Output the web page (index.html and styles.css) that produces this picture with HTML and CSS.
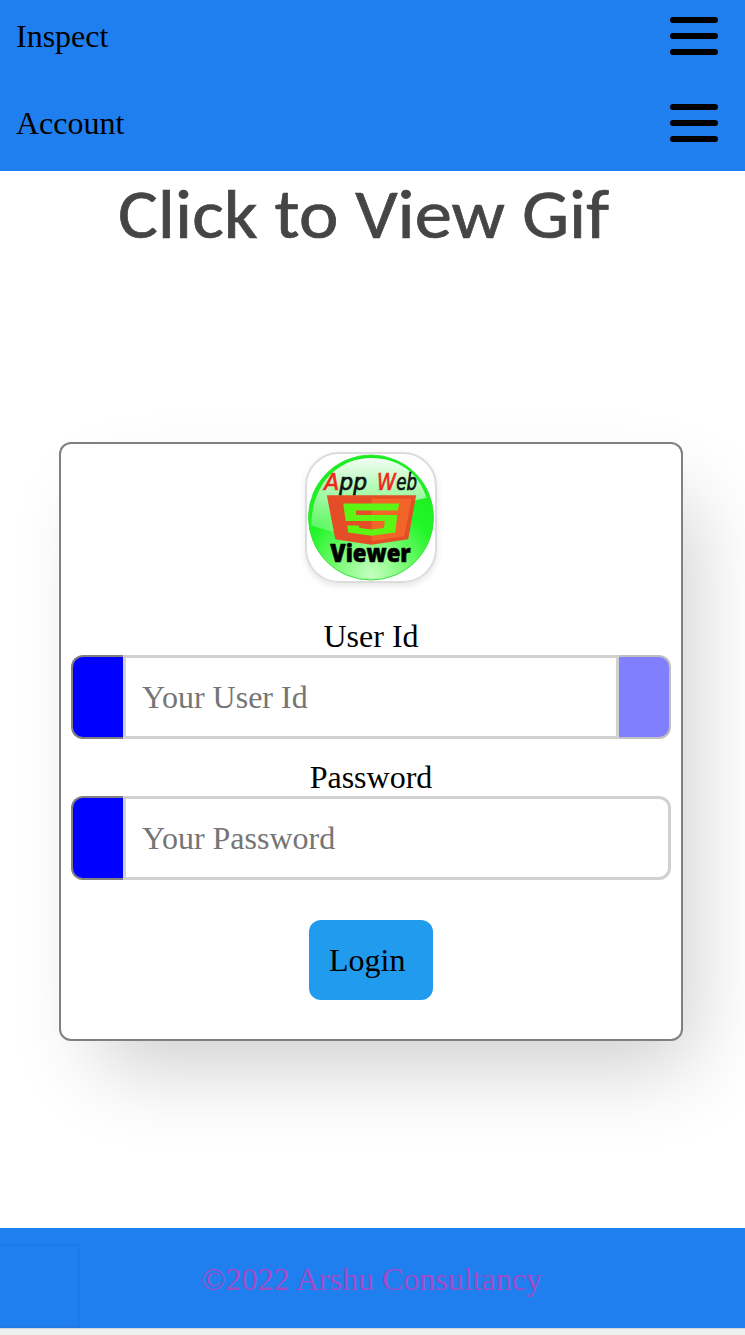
FILE: index.html
```
<!DOCTYPE html>
<html lang="en">
<head>
<meta charset="utf-8">
<title>App Web Viewer</title>
<link rel="stylesheet" href="styles.css">
</head>
<body>
<header class="nav">
  <div class="nav-row">
    <span class="nav-text">Inspect</span>
    <svg class="burger" viewBox="0 0 48 38"><path d="M3 3H45M3 19H45M3 35H45"/></svg>
  </div>
  <div class="nav-row">
    <span class="nav-text">Account</span>
    <svg class="burger" viewBox="0 0 48 38"><path d="M3 3H45M3 19H45M3 35H45"/></svg>
  </div>
</header>
<main class="main">
  <svg class="banner" viewBox="0 0 745 100"><text x="118" y="67" textLength="491" lengthAdjust="spacingAndGlyphs">Click to View Gif</text></svg>
  <form class="card">
    <svg class="logo" viewBox="0 0 128 128">
      <defs>
        <radialGradient id="ball" cx=".5" cy=".96" r=".9">
          <stop offset="0" stop-color="#c4ffc0"/>
          <stop offset=".3" stop-color="#7dfb78"/>
          <stop offset=".62" stop-color="#22f528"/>
          <stop offset="1" stop-color="#19ee20"/>
        </radialGradient>
        <linearGradient id="gloss" x1="0" y1="0" x2="0" y2="1">
          <stop offset="0" stop-color="#fff" stop-opacity=".95"/>
          <stop offset="1" stop-color="#fff" stop-opacity=".22"/>
        </linearGradient>
      </defs>
      <circle cx="64" cy="64" r="63" fill="url(#ball)" stroke="#35e438" stroke-width="1"/>
      <path d="M4 72C4 30 31 4 64 4C92 4 112 19 120 44C82 50 88 80 47 80C25 80 14 75 4 72Z" fill="url(#gloss)"/>
      <path d="M19.500 41.500H109.500L101.500 86L64.500 91.500L28 86Z" fill="#e44d26"/>
      <path d="M64.500 45H105L97.500 83L64.500 88Z" fill="#f16529"/>
      <path d="M36 50H92.500L91 57H49V61.500H90.500L88.500 79L64.500 82.500L41 79L40 72H51.500L52.500 74.500L64.500 76L77 74.500L78 67.500H38.500Z" fill="#5cf514"/>
      <g class="logo-script">
        <text x="17" y="36.500" textLength="43" lengthAdjust="spacingAndGlyphs"><tspan class="red">A</tspan>pp</text>
        <text class="red" x="70" y="36.500" textLength="19" lengthAdjust="spacingAndGlyphs">W</text>
        <text x="89.500" y="36.500" textLength="21" lengthAdjust="spacingAndGlyphs">eb</text>
      </g>
      <text class="logo-name" x="23" y="108.500" textLength="81" lengthAdjust="spacingAndGlyphs">Viewer</text>
    </svg>
    <label class="label" for="user">User Id</label>
    <div class="field">
      <span class="cap cap-start"></span>
      <input class="input" id="user" type="text" placeholder="Your User Id">
      <span class="cap cap-end"></span>
    </div>
    <label class="label" for="password">Password</label>
    <div class="field">
      <span class="cap cap-start"></span>
      <input class="input input-last" id="password" type="password" placeholder="Your Password">
    </div>
    <button class="login" type="button">Login</button>
  </form>
</main>
<footer class="footer">
  <span class="footer-box"></span>
  <span class="copyright">©2022 Arshu Consultancy</span>
</footer>
</body>
</html>
```
FILE: styles.css
```
* { box-sizing: border-box; }
body {
  margin: 0;
  height: 1335px;
  overflow: hidden;
  display: flex;
  flex-direction: column;
  background: #eff0f0;
  font-family: "Liberation Serif", serif;
  font-size: 32px;
  line-height: 37px;
  color: #000;
}
.nav { height: 171.4px; flex: none; background: #207fef; }
.nav-row {
  height: 87px;
  padding: 17px 27px 0 16px;
  display: flex;
  justify-content: space-between;
  align-items: flex-start;
}
.nav-text { padding-top: 1px; }
.burger { width: 48px; height: 38px; fill: none; stroke: #000; stroke-width: 6; stroke-linecap: round; }
.main { flex: 1; overflow: hidden; background: #fff; }
.banner {
  display: block;
  width: 745px;
  height: 100px;
  font-family: Carlito, Lato, sans-serif;
  font-size: 70px;
  fill: #454545;
  stroke: #454545;
  stroke-width: .7px;
}
.card {
  width: 624px;
  height: 599px;
  margin: 170.6px 0 0 59px;
  padding: 8px 10px;
  display: flex;
  flex-direction: column;
  align-items: center;
  background: #fff;
  border: 2px solid #808080;
  border-radius: 12px;
  box-shadow: 24px 40px 80px -16px rgba(0, 0, 0, .2);
}
.logo {
  width: 132px;
  height: 131px;
  margin-bottom: 36px;
  border: 2px solid #dcdcdc;
  border-radius: 34px;
  box-shadow: 0 3px 6px rgba(0, 0, 0, .1);
}
.logo-script { font: italic 23px "DejaVu Sans", sans-serif; fill: #111; stroke: #111; stroke-width: .7px; }
.logo-script .red { fill: #f3251d; stroke: #f3251d; }
.logo-name { font: 900 25px "Open Sans", sans-serif; stroke: #000; stroke-width: .6px; }
.label { height: 36px; line-height: 35px; }
.field { display: flex; width: 600px; height: 84px; margin-bottom: 21px; }
.cap { width: 52px; flex: none; background: #00f; border: 2px solid #808080; }
.cap-start { border-right: 0; border-radius: 12px 0 0 12px; }
.cap-end { background: #8080ff; border-color: #bfbfbf; border-left: 0; border-radius: 0 12px 12px 0; }
.input {
  flex: 1;
  min-width: 0;
  padding: 2px 17px 0 16px;
  font: inherit;
  background: #fff;
  border: 3px solid #d1d1d1;
  border-radius: 0;
}
.input::placeholder { color: #757575; }
.input-last { border-radius: 0 12px 12px 0; }
.login {
  width: 124px;
  height: 80px;
  margin-top: 19px;
  padding: 2px 28px 0 20px;
  font: inherit;
  text-align: left;
  color: #000;
  background: #209bee;
  border: 0;
  border-radius: 12px;
}
.footer {
  flex: none;
  height: 100px;
  margin-bottom: 7px;
  padding-top: 16px;
  display: grid;
  grid-template-columns: 80px 1fr 80px;
  background: #207fef;
  box-shadow: 0 1px 0 #cfd3dc;
}
.footer-box { border: 2px solid #1f79e4; border-left: 0; }
.copyright { padding-top: 17px; margin-left: -2px; text-align: center; color: #a04bc8; }
```
